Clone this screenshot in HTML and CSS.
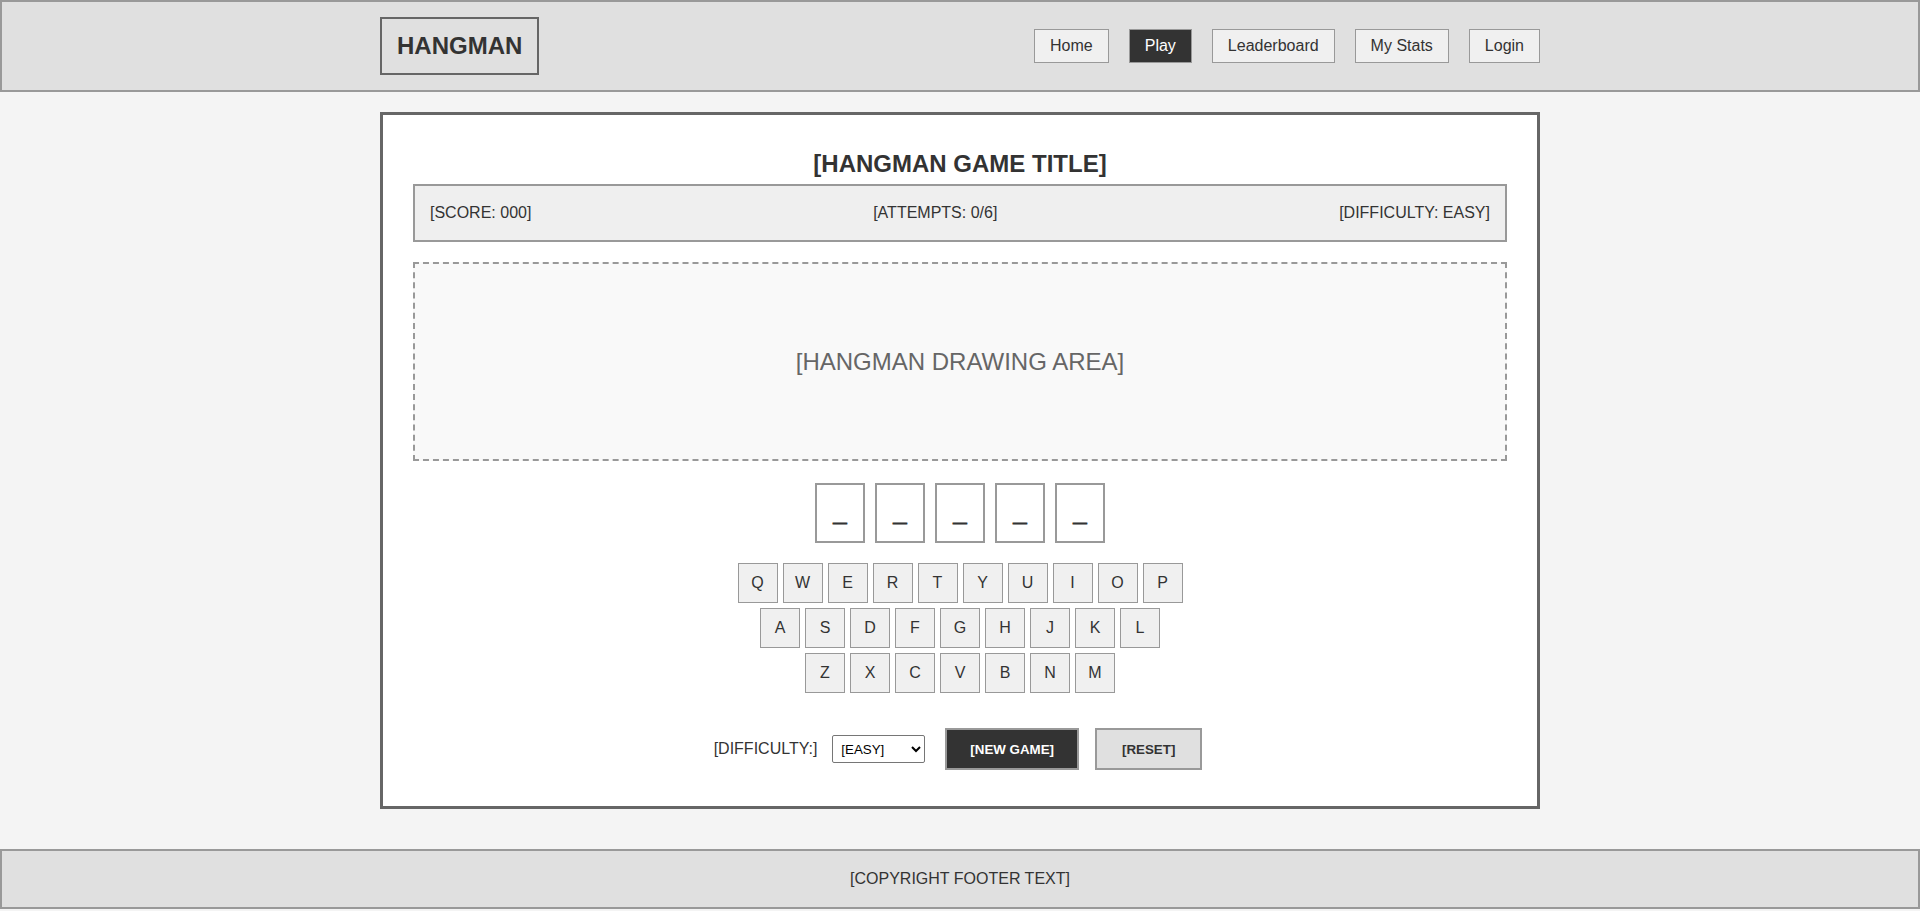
FILE: index.html
```html
<!DOCTYPE html>
<html lang="en">
<head>
<meta charset="utf-8">
<title>Hangman</title>
<link rel="stylesheet" href="styles.css">
</head>
<body>
<header class="site-header">
  <div class="header-inner">
    <div class="logo">HANGMAN</div>
    <nav class="nav">
      <a class="nav-btn" href="#">Home</a>
      <a class="nav-btn active" href="#">Play</a>
      <a class="nav-btn" href="#">Leaderboard</a>
      <a class="nav-btn" href="#">My Stats</a>
      <a class="nav-btn" href="#">Login</a>
    </nav>
  </div>
</header>

<main class="main">
  <section class="game">
    <h1 class="game-title">[HANGMAN GAME TITLE]</h1>
    <div class="stats">
      <span>[SCORE: 000]</span>
      <span>[ATTEMPTS: 0/6]</span>
      <span>[DIFFICULTY: EASY]</span>
    </div>
    <div class="drawing">[HANGMAN DRAWING AREA]</div>
    <div class="word">
      <div class="slot">_</div>
      <div class="slot">_</div>
      <div class="slot">_</div>
      <div class="slot">_</div>
      <div class="slot">_</div>
    </div>
    <div class="keyboard">
      <div class="krow">
        <button class="key">Q</button><button class="key">W</button><button class="key">E</button><button class="key">R</button><button class="key">T</button><button class="key">Y</button><button class="key">U</button><button class="key">I</button><button class="key">O</button><button class="key">P</button>
      </div>
      <div class="krow">
        <button class="key">A</button><button class="key">S</button><button class="key">D</button><button class="key">F</button><button class="key">G</button><button class="key">H</button><button class="key">J</button><button class="key">K</button><button class="key">L</button>
      </div>
      <div class="krow">
        <button class="key">Z</button><button class="key">X</button><button class="key">C</button><button class="key">V</button><button class="key">B</button><button class="key">N</button><button class="key">M</button>
      </div>
    </div>
    <div class="controls">
      <label class="ctrl-label" for="diff">[DIFFICULTY:]</label>
      <select id="diff" class="ctrl-select">
        <option>[EASY]</option>
        <option>[MEDIUM]</option>
        <option>[HARD]</option>
      </select>
      <button class="btn btn-dark">[NEW GAME]</button>
      <button class="btn btn-light">[RESET]</button>
    </div>
  </section>
</main>

<footer class="site-footer">[COPYRIGHT FOOTER TEXT]</footer>
</body>
</html>
```

FILE: styles.css
```css
* { box-sizing: border-box; }

body {
  margin: 0;
  background: #f4f4f4;
  font-family: "Liberation Sans", Arial, sans-serif;
  color: #333;
}

.site-header {
  background: #e0e0e0;
  border: 2px solid #999;
  padding: 15px 0;
}

.header-inner {
  width: 1160px;
  margin: 0 auto;
  display: flex;
  justify-content: space-between;
  align-items: center;
}

.logo {
  border: 2px solid #666;
  padding: 13px 15px;
  font-size: 24px;
  font-weight: bold;
  line-height: 27.6px;
  color: #333;
}

.nav {
  display: flex;
  gap: 20px;
}

.nav-btn {
  display: block;
  border: 1px solid #999;
  background: #f0f0f0;
  color: #333;
  text-decoration: none;
  font-size: 16px;
  line-height: 18px;
  padding: 7px 15px;
}

.nav-btn.active {
  background: #333;
  color: #fff;
}

.main {
  padding: 20px 0 40px;
}

.game {
  width: 1160px;
  margin: 0 auto;
  background: #fff;
  border: 3px solid #666;
  padding: 30px;
}

.game-title {
  margin: 5px 0 7px;
  text-align: center;
  font-size: 24px;
  line-height: 27.6px;
  font-weight: bold;
  color: #333;
}

.stats {
  display: flex;
  justify-content: space-between;
  align-items: center;
  height: 58px;
  padding: 0 15px;
  background: #efefef;
  border: 2px solid #999;
  font-size: 16px;
}

.drawing {
  margin-top: 20px;
  height: 199px;
  border: 2px dashed #999;
  background: #f9f9f9;
  display: flex;
  align-items: center;
  justify-content: center;
  font-size: 24px;
  color: #666;
}

.word {
  margin-top: 22px;
  display: flex;
  justify-content: center;
  gap: 10px;
}

.slot {
  width: 50px;
  height: 60px;
  border: 2px solid #999;
  background: #fff;
  display: flex;
  align-items: center;
  justify-content: center;
  font-size: 24px;
  font-weight: bold;
  color: #333;
  -webkit-text-stroke: 1px #333;
}

.keyboard {
  margin-top: 20px;
  display: flex;
  flex-direction: column;
  gap: 5px;
}

.krow {
  display: flex;
  justify-content: center;
  gap: 5px;
}

.key {
  width: 40px;
  height: 40px;
  padding: 0;
  border: 1px solid #999;
  background: #f0f0f0;
  color: #333;
  font-family: "Liberation Sans", Arial, sans-serif;
  font-size: 16px;
}

.controls {
  margin: 35px 0 6px;
  padding-right: 4px;
  display: flex;
  justify-content: center;
  align-items: center;
}

.ctrl-label {
  font-size: 16px;
  margin-right: 15px;
  color: #333;
}

.ctrl-select {
  width: 93px;
  height: 28px;
  margin-right: 20px;
  padding: 0 4px;
  border: 1px solid #767676;
  border-radius: 2px;
  background: #fff;
  color: #000;
  font-family: "Liberation Sans", Arial, sans-serif;
  font-size: 13.333px;
}

.btn {
  font-family: "Liberation Sans", Arial, sans-serif;
  font-size: 13.333px;
  font-weight: bold;
  line-height: 15.3px;
  padding: 11.5px 23px;
  border: 2px solid #999;
}

.btn-dark {
  background: #333;
  color: #fff;
  margin-right: 16px;
}

.btn-light {
  background: #e0e0e0;
  color: #333;
  padding-left: 25px;
  padding-right: 25px;
}

.site-footer {
  background: #e0e0e0;
  border: 2px solid #999;
  height: 60px;
  display: flex;
  align-items: center;
  justify-content: center;
  font-size: 16px;
  color: #333;
}
```
